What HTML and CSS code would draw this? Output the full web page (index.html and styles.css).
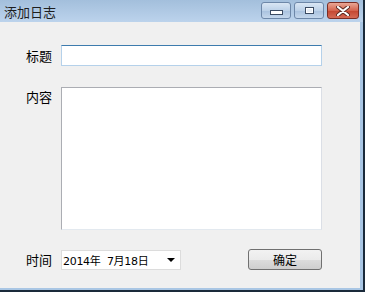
FILE: index.html
```html
<!DOCTYPE html>
<html lang="zh">
<head>
    <meta charset="UTF-8">
    <title>添加日志</title>
    <link rel="stylesheet" href="styles.css">
</head>
<body>
    <div class="window">
        <div class="titlebar">
            <span class="title">添加日志</span>
            <div class="controls">
                <button class="ctl min"><span class="bar"></span></button>
                <button class="ctl max"><span class="box"></span></button>
                <button class="ctl close">
                    <svg width="14" height="10" viewBox="0 0 14 10">
                        <path d="M2 1 L12 9 M12 1 L2 9" stroke="#5a2a22" stroke-width="4" stroke-linecap="round"/>
                        <path d="M2 1 L12 9 M12 1 L2 9" stroke="#fff" stroke-width="2.2" stroke-linecap="round"/>
                    </svg>
                </button>
            </div>
        </div>
        <div class="client">
            <div class="row title-row">
                <label>标题</label>
                <input type="text" class="text-input">
            </div>
            <div class="row content-row">
                <label>内容</label>
                <div class="textarea"></div>
            </div>
            <div class="row time-row">
                <label>时间</label>
                <div class="datepicker">
                    <span>2014年&nbsp; 7月18日</span>
                    <span class="arrow"></span>
                </div>
                <button class="ok">确定</button>
            </div>
        </div>
    </div>
</body>
</html>
```
FILE: styles.css
```css
body {
    margin: 0;
    width: 365px;
    height: 292px;
    overflow: hidden;
    font-family: "Noto Sans CJK SC", "DejaVu Sans", sans-serif;
    font-size: 12px;
    color: #000;
}

.window {
    width: 365px;
    height: 292px;
    display: flex;
    flex-direction: column;
    box-sizing: border-box;
    border-right: 2px solid #1a2a3a;
    border-bottom: 2px solid #1a2a3a;
    background: #a9c6e4;
}

.titlebar {
    height: 22px;
    display: flex;
    align-items: center;
    justify-content: space-between;
    background: linear-gradient(to bottom, #a3bfdc, #bcd3ec);
}

.title {
    margin-left: 4px;
    font-size: 13px;
    color: #1e1e1e;
}

.controls {
    display: flex;
    gap: 3px;
    margin-right: 4px;
    align-self: flex-start;
    margin-top: 2px;
}

.ctl {
    width: 30px;
    height: 17px;
    padding: 0;
    border: 1px solid #6d87a8;
    border-radius: 3px;
    background: linear-gradient(to bottom, #d9e6f4, #bcd1e8 50%, #a8c1de 51%, #c4d7ec);
    display: flex;
    align-items: center;
    justify-content: center;
}

.ctl.close {
    width: 32px;
    border-color: #7a2d24;
    background: linear-gradient(to bottom, #e9a795, #d4644e 50%, #c3452f 51%, #d46a55);
}

.bar {
    width: 11px;
    height: 3px;
    background: #fff;
    border: 1px solid #3b4b62;
    margin-top: 4px;
}

.box {
    width: 7px;
    height: 5px;
    border: 1px solid #3b4b62;
    box-shadow: inset 0 0 0 1px #fff;
    background: #e8eef6;
}

.client {
    flex: 1;
    margin-right: 3px;
    margin-bottom: 2px;
    background: #f0f0f0;
    display: flex;
    flex-direction: column;
    padding-left: 26px;
}

.row {
    display: flex;
    align-items: center;
}

.row label {
    width: 35px;
    font-size: 13px;
}

.title-row {
    margin-top: 23px;
}

.text-input {
    width: 261px;
    height: 21px;
    box-sizing: border-box;
    margin: 0;
    border: 1px solid #b5d1ea;
    border-top-color: #3d7bad;
    background: #fff;
    outline: none;
}

.content-row {
    margin-top: 21px;
    align-items: flex-start;
}

.textarea {
    width: 261px;
    height: 143px;
    box-sizing: border-box;
    border: 1px solid #abadb3;
    border-right-color: #dbdfe6;
    border-bottom-color: #e3e9ef;
    background: #fff;
}

.time-row {
    margin-top: 19px;
}

.datepicker {
    width: 120px;
    height: 20px;
    box-sizing: border-box;
    border: 1px solid #dcdcdc;
    background: #fff;
    display: flex;
    align-items: center;
    justify-content: space-between;
    padding: 0 5px 0 1px;
    font-family: "DejaVu Sans", "Noto Sans CJK SC", sans-serif;
    font-size: 11px;
    letter-spacing: -0.3px;
}

.arrow {
    width: 0;
    height: 0;
    border-left: 4px solid transparent;
    border-right: 4px solid transparent;
    border-top: 4px solid #000;
}

.ok {
    margin-left: 67px;
    width: 74px;
    height: 21px;
    padding: 0;
    border: 1px solid #707070;
    border-radius: 3px;
    background: linear-gradient(to bottom, #f2f2f2, #ebebeb 50%, #dddddd 51%, #cfcfcf);
    font-family: "Noto Sans CJK SC", sans-serif;
    font-size: 12px;
    color: #000;
}
```
